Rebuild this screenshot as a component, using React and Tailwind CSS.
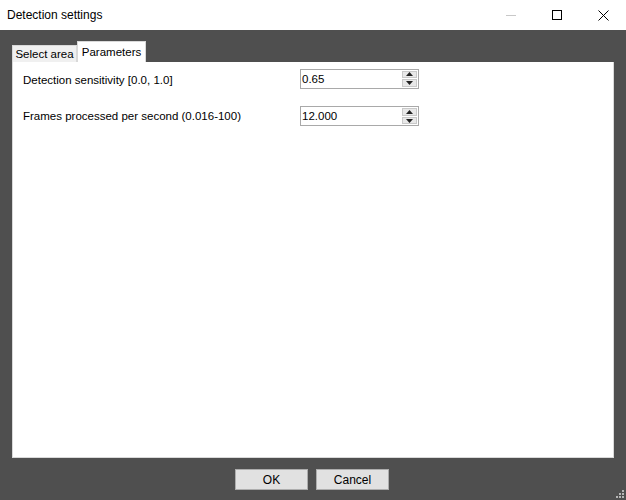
import { useState } from 'react'

const FONT = { fontFamily: '"Liberation Sans", Arial, sans-serif' }

function Spin({ value }) {
  return (
    <div className="flex h-[20px] w-[119px] border border-[#a9a9a9] bg-white">
      <div className="flex-1 pl-[1px] text-[11.5px] leading-[18px] text-black">{value}</div>
      <div className="my-[1px] mr-[1px] flex w-[15px] flex-col gap-[1px]">
        <div className="flex flex-1 items-center justify-center border border-[#c9c9c9] bg-[#e8e8e8]">
          <svg width="7" height="4" viewBox="0 0 7 4"><path d="M0 4 L3.5 0 L7 4 Z" fill="#222" /></svg>
        </div>
        <div className="flex flex-1 items-center justify-center border border-[#c9c9c9] bg-[#e8e8e8]">
          <svg width="7" height="4" viewBox="0 0 7 4"><path d="M0 0 L3.5 4 L7 0 Z" fill="#222" /></svg>
        </div>
      </div>
    </div>
  )
}

export default function App() {
  const [tab, setTab] = useState('params')

  return (
    <div className="flex h-[500px] w-[626px] flex-col bg-[#4f4f4f]" style={FONT}>
      {/* title bar */}
      <div className="flex h-[30px] items-center bg-white">
        <div className="pl-[7px] text-[12px] text-black">Detection settings</div>
        <div className="ml-auto flex h-full">
          <div className="flex w-[46px] items-center justify-center">
            <div className="h-[1px] w-[10px] bg-[#c8c8c8]" />
          </div>
          <div className="flex w-[46px] items-center justify-center">
            <div className="h-[10px] w-[10px] border border-black" />
          </div>
          <div className="flex w-[46px] items-center justify-center">
            <svg width="11" height="11" viewBox="0 0 11 11"><path d="M0.5 0.5 L10.5 10.5 M10.5 0.5 L0.5 10.5" stroke="#000" strokeWidth="1" /></svg>
          </div>
        </div>
      </div>

      {/* tabs */}
      <div className="flex h-[32px] items-end pl-[12px]">
        <button
          onClick={() => setTab('area')}
          className="h-[17px] w-[65px] border border-b-0 border-[#d9d9d9] bg-[#f0f0f0] text-[11.5px] leading-[17px] text-black"
        >
          Select area
        </button>
        <button
          onClick={() => setTab('params')}
          className="h-[21px] w-[69px] border border-b-0 border-[#d9d9d9] bg-white text-[11.5px] leading-[18px] text-black"
        >
          Parameters
        </button>
      </div>

      {/* panel */}
      <div className="mx-[12px] h-[396px] border border-t-0 border-[#d9d9d9] bg-white px-[10px] pt-[6px]">
        {tab === 'params' && (
          <div className="flex flex-col gap-[17px]">
            <div className="flex items-center">
              <div className="w-[277px] pt-[4px] text-[11.5px] text-black">Detection sensitivity [0.0, 1.0]</div>
              <Spin value="0.65" />
            </div>
            <div className="flex items-center">
              <div className="w-[277px] pt-[1px] text-[11.5px] text-black">Frames processed per second (0.016-100)</div>
              <Spin value="12.000" />
            </div>
          </div>
        )}
      </div>

      {/* buttons */}
      <div className="relative flex flex-1 justify-center gap-[8px] pr-[2px] pt-[11px]">
        <button className="h-[21px] w-[73px] border border-[#adadad] bg-[#e1e1e1] text-[12px] text-black">OK</button>
        <button className="h-[21px] w-[73px] border border-[#adadad] bg-[#e1e1e1] text-[12px] text-black">Cancel</button>
        <svg className="absolute bottom-[1px] right-[1px]" width="10" height="10" viewBox="0 0 10 10">
          <rect x="7" y="1" width="2" height="2" fill="#b5b5b5" />
          <rect x="4" y="4" width="2" height="2" fill="#b5b5b5" />
          <rect x="7" y="4" width="2" height="2" fill="#b5b5b5" />
          <rect x="1" y="7" width="2" height="2" fill="#b5b5b5" />
          <rect x="4" y="7" width="2" height="2" fill="#b5b5b5" />
          <rect x="7" y="7" width="2" height="2" fill="#b5b5b5" />
        </svg>
      </div>
    </div>
  )
}
